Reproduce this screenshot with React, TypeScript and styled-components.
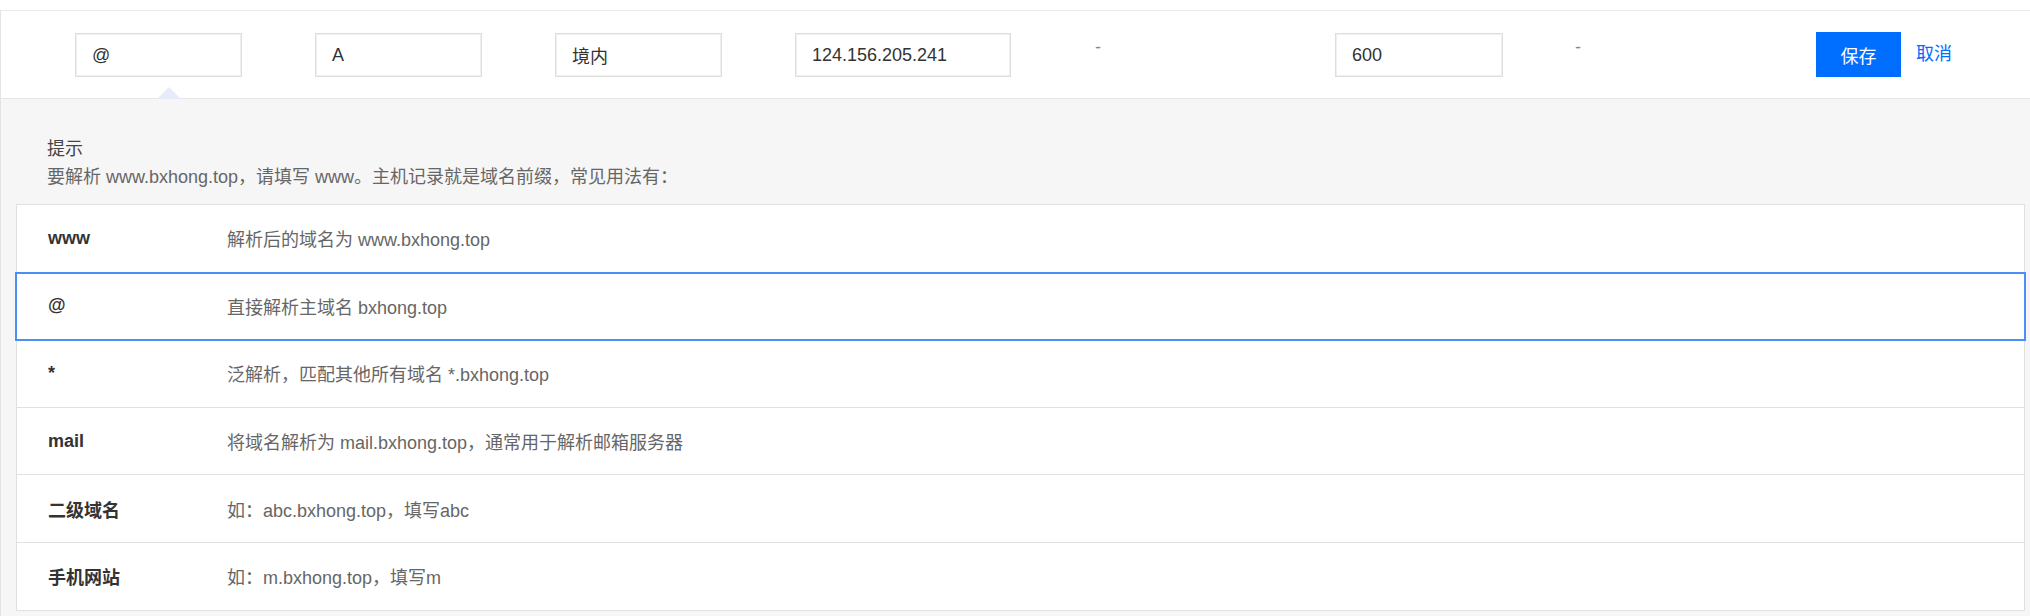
import React from "react";
import styled, { createGlobalStyle } from "styled-components";

const GlobalStyle = createGlobalStyle`
  html, body { margin: 0; padding: 0; background: #ffffff; }
  body {
    font-family: "Liberation Sans", Arial, "Noto Sans CJK SC", sans-serif;
    font-size: 18px;
    color: #333;
  }
`;

const Page = styled.div`
  padding-top: 10px;
  width: 2030px;
  box-sizing: border-box;
`;

const Panel = styled.div`
  border-top: 1px solid #e9e9e9;
  border-left: 1px solid #e4e4e4;
`;

const EditRow = styled.div`
  position: relative;
  display: grid;
  grid-template-columns: 240px 240px 240px 300px 240px 240px 241px 1fr;
  padding: 22px 0 21px 58px;
  background: #fff;
  border-bottom: 1px solid #e6e6e6;
`;

const Cell = styled.div`
  padding: 0 16px;
  display: flex;
  align-items: flex-start;
  gap: 15px;
`;

const Field = styled.div<{ $w: number }>`
  width: ${(p) => p.$w}px;
  height: 44px;
  box-sizing: border-box;
  border: 1px solid #dedede;
  box-shadow: inset 0 0 0 1px #efefef;
  padding: 0 16px;
  display: flex;
  align-items: center;
  font-size: 18px;
  color: #333;
`;

const Dash = styled.div`
  padding-top: 2px;
  line-height: 24px;
  color: #888;
  font-size: 18px;
`;

const SaveButton = styled.button`
  width: 85px;
  height: 45px;
  margin-top: -1px;
  border: none;
  background: #006eff;
  color: #fff;
  font: inherit;
  font-size: 18px;
  padding: 0;
  cursor: pointer;
`;

const CancelLink = styled.a`
  color: #006eff;
  font-size: 18px;
  line-height: 45px;
  margin-top: -1px;
  cursor: pointer;
`;

const Pointer = styled.div`
  position: absolute;
  left: 156px;
  bottom: -1px;
  width: 0;
  height: 0;
  border-left: 12px solid transparent;
  border-right: 12px solid transparent;
  border-bottom: 12px solid #e4edf9;
`;

const HintArea = styled.div`
  background: #f6f6f6;
  padding: 36px 5px 5px 15px;
`;

const HintText = styled.div`
  padding: 0 31px 13px;
  line-height: 28px;
  font-size: 18px;
  color: #666;
`;

const HintTitle = styled.div`
  color: #444;
`;

const Table = styled.div`
  background: #fff;
  border: 1px solid #e0e0e0;
  border-bottom: none;
`;

const Row = styled.div<{ $active?: boolean }>`
  display: grid;
  grid-template-columns: 210px 1fr;
  align-items: center;
  height: 67.6px;
  box-sizing: border-box;
  border-bottom: 1px solid #e0e0e0;
  ${(p) =>
    p.$active
      ? `outline: 2px solid #4a90f4; outline-offset: -1px; position: relative; z-index: 1; margin-right: -1px; margin-left: -1px; padding-left: 1px;`
      : ""}
`;

const Key = styled.div`
  padding-left: 31px;
  font-weight: bold;
  color: #333;
  font-size: 18px;
`;

const Desc = styled.div`
  color: #666;
  font-size: 18px;
`;

const rows = [
  { k: "www", d: "解析后的域名为 www.bxhong.top" },
  { k: "@", d: "直接解析主域名 bxhong.top", active: true },
  { k: "*", d: "泛解析，匹配其他所有域名 *.bxhong.top" },
  { k: "mail", d: "将域名解析为 mail.bxhong.top，通常用于解析邮箱服务器" },
  { k: "二级域名", d: "如：abc.bxhong.top，填写abc" },
  { k: "手机网站", d: "如：m.bxhong.top，填写m" },
];

export default function App() {
  return (
    <>
      <GlobalStyle />
      <Page>
        <Panel>
          <EditRow>
            <Cell><Field $w={167}>@</Field></Cell>
            <Cell><Field $w={167}>A</Field></Cell>
            <Cell><Field $w={167}>境内</Field></Cell>
            <Cell><Field $w={216}>124.156.205.241</Field></Cell>
            <Cell><Dash>-</Dash></Cell>
            <Cell><Field $w={168}>600</Field></Cell>
            <Cell><Dash>-</Dash></Cell>
            <Cell>
              <SaveButton>保存</SaveButton>
              <CancelLink>取消</CancelLink>
            </Cell>
            <Pointer />
          </EditRow>
          <HintArea>
            <HintText>
              <HintTitle>提示</HintTitle>
              <div>要解析 www.bxhong.top，请填写 www。主机记录就是域名前缀，常见用法有：</div>
            </HintText>
            <Table>
              {rows.map((r) => (
                <Row key={r.k} $active={r.active}>
                  <Key>{r.k}</Key>
                  <Desc>{r.d}</Desc>
                </Row>
              ))}
            </Table>
          </HintArea>
        </Panel>
      </Page>
    </>
  );
}
